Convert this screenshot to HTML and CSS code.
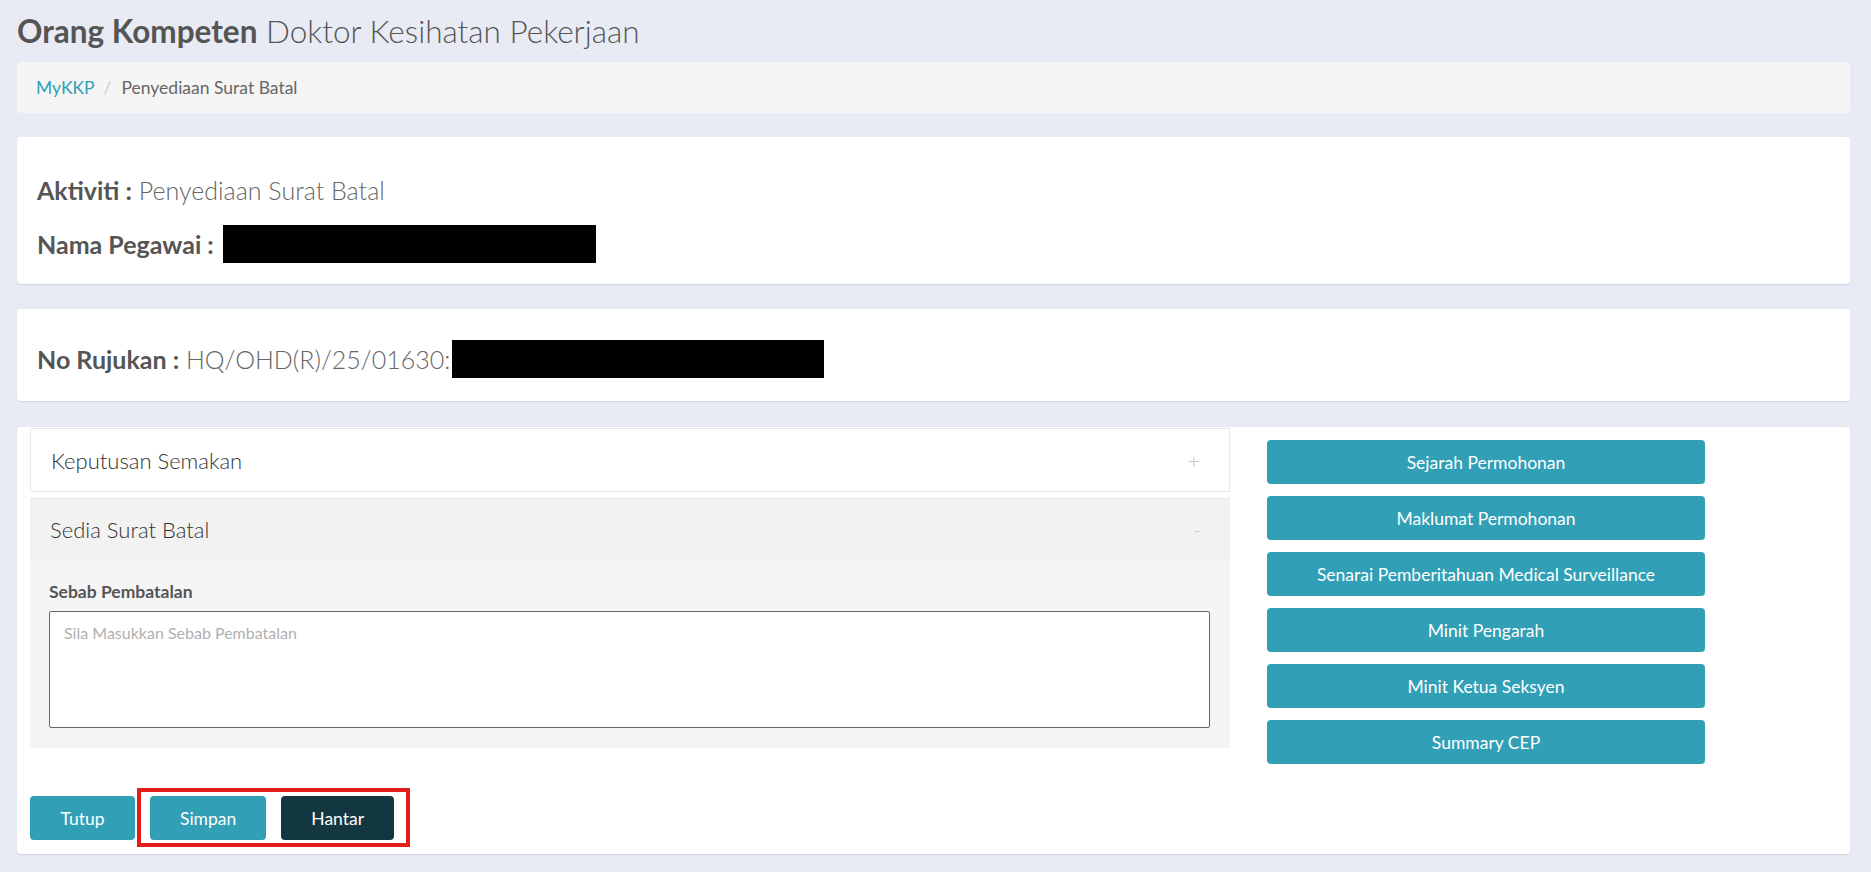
FILE: index.html
```html
<!DOCTYPE html>
<html lang="ms">

<head>
  <meta charset="UTF-8">
  <meta name="viewport" content="width=device-width, initial-scale=1.0">
  <title>Penyediaan Surat Batal</title>
  <link rel="stylesheet" href="styles.css">
</head>

<body>
  <div class="page">
    <h1 class="page-title"><b>Orang Kompeten</b> Doktor Kesihatan Pekerjaan</h1>

    <ol class="breadcrumb">
      <li><a href="#">MyKKP</a></li>
      <li class="active">Penyediaan Surat Batal</li>
    </ol>

    <div class="card info-card">
      <div class="info-line"><b>Aktiviti :</b> Penyediaan Surat Batal</div>
      <div class="info-line"><b>Nama Pegawai :</b> <span class="masked masked-name"></span></div>
    </div>

    <div class="card ref-card">
      <div class="info-line"><b>No Rujukan :</b> HQ/OHD(R)/25/01630:<span class="masked masked-ref"></span></div>
    </div>

    <div class="card form-card">
      <div class="form-grid">
        <div class="accordion">
          <div class="panel">
            <div class="panel-heading">
              <span>Keputusan Semakan</span>
              <span class="toggle">+</span>
            </div>
          </div>
          <div class="panel open">
            <div class="panel-heading">
              <span>Sedia Surat Batal</span>
              <span class="toggle">-</span>
            </div>
            <div class="panel-body">
              <label for="sebab">Sebab Pembatalan</label>
              <textarea id="sebab" placeholder="Sila Masukkan Sebab Pembatalan"></textarea>
            </div>
          </div>
        </div>

        <div class="side-actions">
          <button class="btn btn-info">Sejarah Permohonan</button>
          <button class="btn btn-info">Maklumat Permohonan</button>
          <button class="btn btn-info">Senarai Pemberitahuan Medical Surveillance</button>
          <button class="btn btn-info">Minit Pengarah</button>
          <button class="btn btn-info">Minit Ketua Seksyen</button>
          <button class="btn btn-info">Summary CEP</button>
        </div>
      </div>

      <div class="form-footer">
        <button class="btn btn-info btn-close">Tutup</button>
        <div class="marked">
          <button class="btn btn-info">Simpan</button>
          <button class="btn btn-dark">Hantar</button>
        </div>
      </div>
    </div>
  </div>
</body>

</html>
```

FILE: styles.css
```css
* {
  box-sizing: border-box;
  margin: 0;
  padding: 0;
}
body {
  background: #e8ebf4;
  color: #555;
  font-family: Lato, "Open Sans", sans-serif;
}
.page {
  padding: 14px 21px 18px 17px;
}
.page-title {
  font-size: 31.5px;
  line-height: 35px;
  font-weight: 300;
  color: #555;
}
.page-title b {
  font-weight: 700;
}

/* breadcrumb */
.breadcrumb {
  margin-top: 13px;
  background: #f5f5f5;
  border-radius: 4px;
  padding: 13px 19px;
  list-style: none;
  display: flex;
  font-size: 17.5px;
  line-height: 25px;
}
.breadcrumb a {
  color: #319fb5;
  text-decoration: none;
}
.breadcrumb li + li::before {
  content: "/";
  color: #ccc;
  padding: 0 10px 0 9px;
}
.breadcrumb .active {
  color: #666;
}

/* cards */
.card {
  background: #fff;
  border-radius: 4px;
  box-shadow: 0 1px 1px rgba(40, 60, 110, 0.12);
  margin-top: 24px;
}
.info-card {
  padding: 34px 20px 21px;
}
.ref-card {
  margin-top: 25px;
  padding: 31px 20px 23px;
}
.info-line {
  font-size: 25px;
  line-height: 38px;
  font-weight: 300;
  color: #666;
  white-space: nowrap;
}
.info-line + .info-line {
  margin-top: 16px;
}
.info-line b {
  font-weight: 700;
  color: #555;
}
.masked {
  display: inline-block;
  vertical-align: top;
  background: #000;
  height: 38px;
}
.masked-name {
  width: 373px;
  margin-left: 2px;
}
.masked-ref {
  width: 372px;
  margin-left: 2px;
}

/* accordion + side buttons */
.form-card {
  margin-top: 26px;
  padding: 1px 13px 14px;
}
.form-grid {
  display: grid;
  grid-template-columns: 1200px 438px;
  column-gap: 37px;
  align-items: start;
}
.panel {
  border: 1px solid #e8e8e8;
  background: #fff;
}
.panel + .panel {
  margin-top: 6px;
}
.panel-heading {
  height: 62px;
  display: flex;
  align-items: center;
  justify-content: space-between;
  padding: 0 29px 0 20px;
  font-size: 22px;
  font-weight: 300;
  color: #333;
}
.panel.open {
  border: none;
  border-top: 1px solid #e6e6e6;
}
.panel.open .panel-heading {
  height: 61px;
  background: #f2f2f2;
}
.toggle {
  color: #c8c8c8;
  font-size: 21px;
  font-weight: 300;
}
.panel-body {
  background: #f5f5f5;
  padding: 20px 20px 20px 19px;
}
.panel-body label {
  display: block;
  font-size: 17.5px;
  line-height: 24px;
  font-weight: 700;
  color: #555;
  margin-bottom: 7px;
}
.panel-body textarea {
  display: block;
  width: 100%;
  height: 117px;
  border: 1px solid #666;
  border-radius: 2px;
  background: #fff;
  padding: 11px 14px;
  font-family: Lato, sans-serif;
  font-size: 16px;
  resize: none;
}
.panel-body textarea::placeholder {
  color: #b0b0b0;
}
.side-actions {
  padding-top: 12px;
  display: flex;
  flex-direction: column;
  gap: 12px;
}

/* buttons */
.btn {
  height: 44px;
  border: none;
  border-radius: 4px;
  padding: 0 30px;
  font-family: Lato, sans-serif;
  font-size: 17.5px;
  color: #fff;
  cursor: pointer;
}
.btn-info {
  background: #319fb5;
}
.btn-dark {
  background: #133740;
}
.btn-close {
  min-width: 105px;
}
.form-footer {
  margin-top: 32px;
  display: flex;
  gap: 15px;
}
.marked {
  position: relative;
  display: flex;
  gap: 15px;
}
.marked::after {
  content: "";
  position: absolute;
  top: -8px;
  bottom: -7px;
  left: -13px;
  right: -16px;
  border: 4px solid #e31c1c;
  pointer-events: none;
}
```
